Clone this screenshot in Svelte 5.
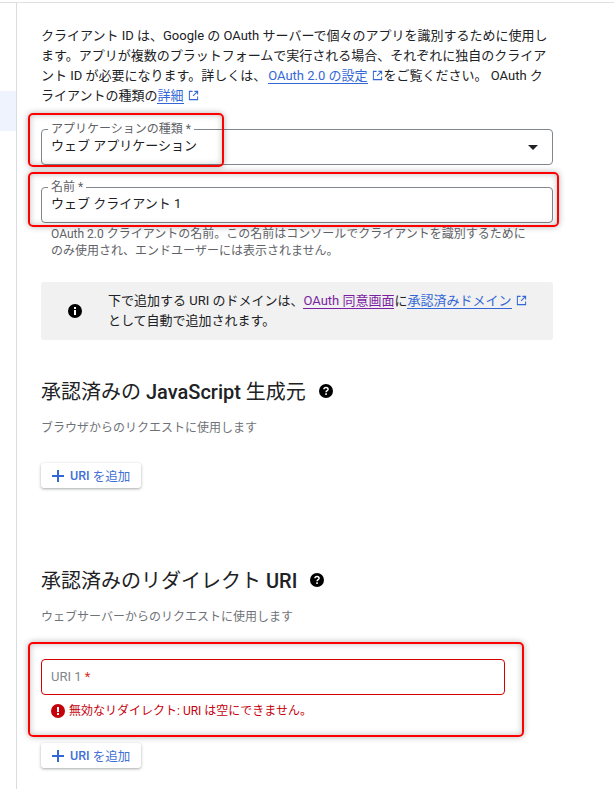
<script>
  const extPath = 'M5 1.5H1.5v9h9V7M7 1.5h3.500V5M10.500 1.500L5.500 6.500';
</script>

{#snippet ext()}
  <svg class="ext" viewBox="0 0 12 12"><path d={extPath} /></svg>
{/snippet}

{#snippet help()}
  <svg class="help" viewBox="0 0 14 14"><circle cx="7" cy="7" r="7" fill="#000" /><path d="M4.900 5.300c.1-1.200 1-1.900 2.100-1.900 1.200 0 2.100.8 2.100 1.800 0 1.500-2 1.500-2 3.100" fill="none" stroke="#fff" stroke-width="1.500" /><rect x="6.200" y="9.300" width="1.700" height="1.600" fill="#fff" /></svg>
{/snippet}

{#snippet add()}
  <button class="add"><span class="plus"></span><b>URI</b>&nbsp;を追加</button>
{/snippet}

<div class="page">
  <aside class="side"><div class="side-active"></div></aside>
  <main class="main">
    <p class="intro">クライアント ID は、Google の OAuth サーバーで個々のアプリを識別するために使用します。アプリが複数のプラットフォームで実行される場合、それぞれに独自のクライアント ID が必要になります。詳しくは、<a class="shifted" href="#a">OAuth 2.0 の設定</a>{@render ext()}をご覧ください。 OAuth クライアントの種類の<a href="#a">詳細</a>{@render ext()}</p>

    <div class="field first">
      <span class="legend">アプリケーションの種類 *</span>
      <span class="value">ウェブ アプリケーション</span>
      <span class="arrow"></span>
      <span class="mark mark-type"></span>
    </div>

    <div class="field second">
      <span class="legend">名前 *</span>
      <span class="value">ウェブ クライアント 1</span>
      <span class="mark mark-name"></span>
    </div>
    <p class="hint">OAuth 2.0 クライアントの名前。この名前はコンソールでクライアントを識別するためにのみ使用され、エンドユーザーには表示されません。</p>

    <div class="info">
      <svg class="info-icon" viewBox="0 0 14 14"><circle cx="7" cy="7" r="7" fill="#000" /><rect x="6" y="6" width="2" height="5" fill="#fff" /><rect x="6" y="3" width="2" height="2" fill="#fff" /></svg>
      <p>下で追加する URI のドメインは、<a class="visited" href="#a">OAuth 同意画面</a>に<a href="#a">承認済みドメイン</a>{@render ext()}<br />として自動で追加されます。</p>
    </div>

    <section class="origins">
      <h2>承認済みの <b>JavaScript</b> 生成元{@render help()}</h2>
      <p class="desc">ブラウザからのリクエストに使用します</p>
      {@render add()}
    </section>

    <section class="redirects">
      <h2>承認済みのリダイレクト <b>URI</b>{@render help()}</h2>
      <p class="desc">ウェブサーバーからのリクエストに使用します</p>
      <div class="uri-wrap">
        <div class="field uri"><span class="placeholder">URI 1 <em>*</em></span></div>
        <div class="error">
          <svg class="err-icon" viewBox="0 0 14 14"><circle cx="7" cy="7" r="7" fill="#c5000b" /><rect x="6" y="3" width="2" height="5" fill="#fff" /><rect x="6" y="9" width="2" height="2" fill="#fff" /></svg>
          無効なリダイレクト: URI は空にできません。
        </div>
        <span class="mark mark-uri"></span>
      </div>
      {@render add()}
    </section>
  </main>
</div>

<style>
  :global(body) {
    margin: 0;
    background: #fff;
  }
  .page {
    display: flex;
    width: 614px;
    height: 787px;
    box-sizing: border-box;
    border-top: 1px solid #e0e0e0;
    margin-top: 2px;
    overflow: hidden;
    font-family: Roboto, "Noto Sans CJK JP", sans-serif;
    color: #202124;
  }
  .side {
    width: 16px;
    border-right: 1px solid #dadce0;
    padding-top: 88px;
    flex: none;
  }
  .side-active {
    height: 40px;
    background: #eef3fd;
  }
  .main {
    width: 512px;
    margin-left: 24px;
    padding-top: 23px;
  }
  p {
    margin: 0;
  }
  .intro {
    font-size: 13px;
    line-height: 20px;
  }
  a {
    color: #3367d6;
    text-decoration: none;
    border-bottom: 1px solid #3367d6;
  }
  a.shifted {
    margin-left: 2px;
  }
  a.visited {
    color: #7b1fa2;
    border-bottom-color: #7b1fa2;
  }
  .ext {
    width: 11px;
    height: 11px;
    margin: 0 1px 0 4px;
    vertical-align: -1px;
    fill: none;
    stroke: #3367d6;
    stroke-width: 1.100;
  }
  .field {
    position: relative;
    box-sizing: border-box;
    height: 36px;
    border: 1px solid #80868b;
    border-radius: 4px;
    background: #fff;
  }
  .first {
    margin-top: 23px;
  }
  .second {
    margin-top: 22px;
  }
  .legend {
    position: absolute;
    left: 6px;
    top: -8px;
    padding: 0 3px;
    background: #fff;
    font-size: 12px;
    line-height: 14px;
    color: #5f6368;
    white-space: nowrap;
  }
  .value {
    position: absolute;
    left: 9px;
    top: 6px;
    font-size: 13px;
    line-height: 20px;
    white-space: nowrap;
  }
  .arrow {
    position: absolute;
    right: 14px;
    top: 15px;
    border-left: 5px solid transparent;
    border-right: 5px solid transparent;
    border-top: 5px solid #202124;
  }
  .mark {
    position: absolute;
    border: 2px solid #f00;
    border-radius: 5px;
    box-shadow: 0 0 6px rgba(0, 0, 0, .3), inset 0 0 6px rgba(0, 0, 0, .25);
    pointer-events: none;
    box-sizing: border-box;
  }
  .mark-type {
    left: -14px;
    top: -17px;
    width: 196px;
    height: 54px;
  }
  .mark-name {
    left: -14px;
    top: -16px;
    width: 531px;
    height: 55px;
  }
  .hint {
    margin: 3px 0 0 10px;
    width: 484px;
    font-size: 12px;
    line-height: 17px;
    color: #5f6368;
  }
  .info {
    display: flex;
    align-items: center;
    box-sizing: border-box;
    height: 58px;
    margin-top: 22px;
    background: #f1f1f1;
    border-radius: 3px;
    padding-left: 27px;
    font-size: 13px;
    line-height: 20px;
  }
  .info-icon {
    width: 14px;
    height: 14px;
    flex: none;
    margin-right: 26px;
  }
  .origins {
    margin-top: 39px;
  }
  .redirects {
    margin-top: 80px;
  }
  h2 {
    margin: 0;
    font-size: 20px;
    font-weight: 400;
    line-height: 26px;
    color: #202124;
    white-space: nowrap;
  }
  h2 b {
    font-weight: 500;
  }
  .help {
    width: 14px;
    height: 14px;
    margin-left: 13px;
    vertical-align: 1px;
  }
  .desc {
    margin-top: 13px;
    font-size: 12px;
    line-height: 20px;
    color: #6f7377;
  }
  .add {
    display: flex;
    align-items: center;
    margin: 25px 0 0;
    width: 100px;
    height: 25px;
    padding: 0 0 0 11px;
    border: 0;
    border-radius: 3px;
    background: #fff;
    box-shadow: 0 1px 3px rgba(60, 64, 67, .45);
    color: #3f70d6;
    font: 400 12.500px Roboto, "Noto Sans CJK JP", sans-serif;
    white-space: nowrap;
  }
  .add b {
    font-weight: 500;
  }
  .plus {
    width: 12px;
    height: 12px;
    margin-right: 6px;
    background:
      linear-gradient(#3367d6, #3367d6) center / 12px 2px no-repeat,
      linear-gradient(#3367d6, #3367d6) center / 2px 12px no-repeat;
  }
  .uri-wrap {
    position: relative;
    margin-top: 32px;
  }
  .uri {
    width: 464px;
    height: 36px;
    border-color: #d50000;
  }
  .placeholder {
    position: absolute;
    left: 9px;
    top: 8px;
    font-size: 13px;
    line-height: 18px;
    color: #80868b;
  }
  .placeholder em {
    font-style: normal;
    color: #d93025;
  }
  .error {
    display: flex;
    align-items: center;
    gap: 4px;
    margin: 8px 0 -1px 10px;
    font-size: 12px;
    line-height: 16px;
    color: #c5000b;
  }
  .err-icon {
    width: 14px;
    height: 14px;
  }
  .mark-uri {
    left: -13px;
    top: -17px;
    width: 496px;
    height: 95px;
  }
</style>
